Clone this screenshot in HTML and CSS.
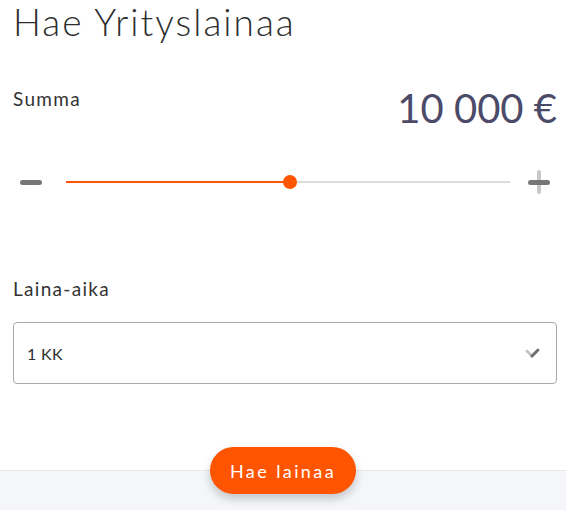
FILE: index.html
```html
<!DOCTYPE html>
<html lang="fi">
<head>
    <meta charset="UTF-8">
    <meta name="viewport" content="width=device-width, initial-scale=1.0">
    <title>Hae Yrityslainaa</title>
    <link rel="stylesheet" href="styles.css">
</head>
<body>

    <!-- Loan form -->
    <div class="loan">
        <h1 class="loan-title">Hae Yrityslainaa</h1>

        <div class="amount-row">
            <label class="field-label">Summa</label>
            <div class="amount-value">10 000 €</div>
        </div>

        <div class="slider">
            <span class="slider-btn minus"></span>
            <div class="slider-track">
                <div class="slider-fill" style="width: 50.5%"></div>
                <span class="slider-thumb" style="left: 50.5%"></span>
            </div>
            <span class="slider-btn plus"></span>
        </div>

        <label class="field-label period-label">Laina-aika</label>
        <div class="select">
            <span>1 KK</span>
            <svg class="select-arrow" width="16" height="12" viewBox="0 0 16 12">
                <path d="M2 4 L7 9" stroke="#c4c4c4" stroke-width="3" stroke-linecap="round"/>
                <path d="M7 9 L13 3" stroke="#6f6f6f" stroke-width="3" stroke-linecap="round"/>
            </svg>
        </div>
    </div>

    <!-- Bottom bar with submit -->
    <div class="footer">
        <button class="submit-btn">Hae lainaa</button>
    </div>

</body>
</html>
```

FILE: styles.css
```css
body {
    font-family: Lato, "Noto Sans", sans-serif;
    margin: 0;
    padding: 0;
    background-color: white;
    color: #2e2e2e;
    height: 510px;
    overflow: hidden;
}

.loan {
    padding: 0 9px 0 13px;
}

.loan-title {
    font-size: 37px;
    font-weight: 300;
    margin: 0;
    line-height: 44px;
    letter-spacing: 2px;
}

.amount-row {
    display: flex;
    justify-content: space-between;
    align-items: flex-start;
    margin-top: 44px;
}

.field-label {
    display: block;
    font-size: 19px;
    line-height: 22px;
    letter-spacing: 1.3px;
    color: #333;
}

.amount-value {
    font-size: 40px;
    line-height: 44px;
    color: #4b4a68;
    margin-top: -2px;
}

.slider {
    display: flex;
    align-items: center;
    margin-top: 40px;
    height: 24px;
}

.slider-btn {
    position: relative;
    width: 24px;
    height: 24px;
    flex: none;
}

.slider-btn.minus {
    margin-left: 6px;
}

.slider-btn.plus {
    margin-right: 6px;
}

.slider-btn::before {
    content: "";
    position: absolute;
    left: 1px;
    right: 1px;
    top: 10px;
    height: 5px;
    border-radius: 3px;
    background: #777;
}

.slider-btn.plus::after {
    content: "";
    position: absolute;
    top: 0;
    bottom: 0;
    left: 10px;
    width: 4px;
    border-radius: 2px;
    background: #c8c8c8;
    z-index: -1;
}

.slider-track {
    position: relative;
    flex: 1;
    height: 2px;
    background: #dcdcdc;
    margin: 0 17px 0 23px;
}

.slider-fill {
    height: 100%;
    background: #ff5400;
}

.slider-thumb {
    position: absolute;
    top: -6px;
    width: 14px;
    height: 14px;
    margin-left: -7px;
    border-radius: 50%;
    background: #ff5400;
}

.period-label {
    margin-top: 84px;
}

.select {
    display: flex;
    align-items: center;
    justify-content: space-between;
    margin-top: 22px;
    height: 60px;
    border: 1px solid #a9a9a9;
    border-radius: 4px;
    padding: 0 15px 0 13px;
    font-size: 16px;
    letter-spacing: 0.3px;
}

.footer {
    margin-top: 86px;
    height: 40px;
    background: #f5f6fa;
    border-top: 1px solid #e6e7ec;
    display: flex;
    justify-content: center;
}

.submit-btn {
    margin-top: -24px;
    height: 47px;
    padding: 0 20px;
    border: none;
    border-radius: 24px;
    background: #ff5400;
    color: white;
    font-family: inherit;
    font-size: 18px;
    letter-spacing: 2.4px;
    box-shadow: 0 5px 10px rgba(0, 0, 0, 0.2);
    align-self: flex-start;
}
```
